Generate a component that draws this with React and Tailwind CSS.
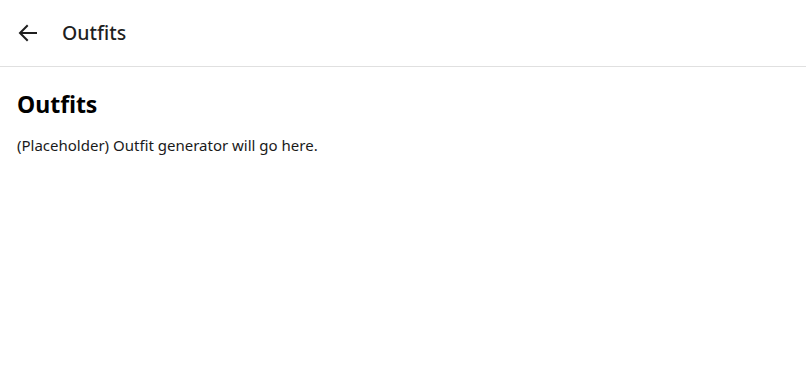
import React from "react";

export default function App() {
  return (
    <div className="min-h-screen bg-white text-[#1a1a1a]" style={{ fontFamily: '"Noto Sans", "Open Sans", sans-serif' }}>
      <header className="h-[67px] flex items-center border-b border-[#e0e0e0] px-4">
        <button className="w-6 h-6 flex items-center justify-center text-[#1f1f1f]">
          <svg width="24" height="24" viewBox="0 0 24 24" fill="none" stroke="currentColor" strokeWidth="2" strokeLinecap="square">
            <path d="M20 12H5" />
            <path d="M11 5l-7 7 7 7" strokeLinejoin="miter" />
          </svg>
        </button>
        <span className="ml-[22px] text-[19.5px] font-medium text-[#1f1f1f]">Outfits</span>
      </header>
      <main className="px-[17px] pt-[22px]">
        <h1 className="text-[23px] font-bold leading-[30px] text-black">Outfits</h1>
        <p className="mt-[15px] text-[15px] leading-[22px] text-[#1a1a1a]">(Placeholder) Outfit generator will go here.</p>
      </main>
    </div>
  );
}
